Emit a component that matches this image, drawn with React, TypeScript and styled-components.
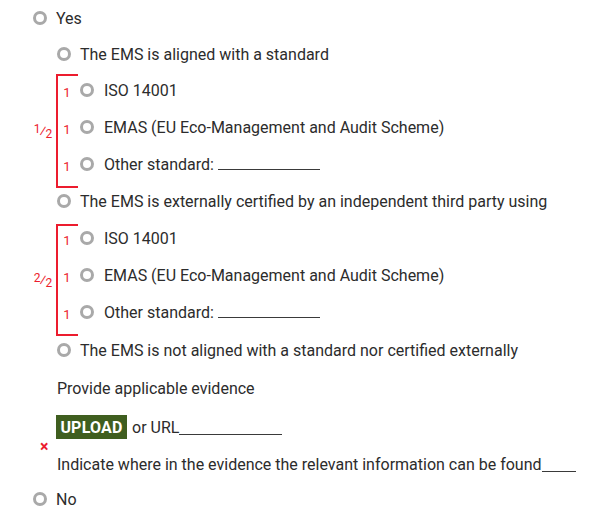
import React from "react";
import styled, { createGlobalStyle } from "styled-components";

const RED = "#ec1c2e";

const GlobalStyle = createGlobalStyle`
  body {
    margin: 0;
    background: #ffffff;
    font-family: Roboto, "Liberation Sans", Arial, sans-serif;
    color: #2c2c2c;
  }
`;

const Page = styled.div`
  display: flex;
  flex-direction: column;
  padding-top: 8px;
  width: 592px;
  font-size: 16px;
`;

const Option = styled.label<{ $indent: number; $mt: number }>`
  display: flex;
  align-items: center;
  height: 20px;
  gap: 9px;
  margin-left: ${(p) => p.$indent}px;
  margin-top: ${(p) => p.$mt}px;
  white-space: nowrap;
`;

const Radio = styled.span`
  flex: none;
  width: 14px;
  height: 14px;
  box-sizing: border-box;
  border: 3px solid #a9a9a9;
  border-radius: 50%;
`;

const Group = styled.div<{ $mt: number }>`
  display: flex;
  margin-left: 30px;
  margin-top: ${(p) => p.$mt}px;
`;

const FractionCol = styled.div`
  width: 26px;
  display: flex;
  align-items: center;
  justify-content: center;
  color: ${RED};
`;

const Fraction = styled.span`
  display: inline-flex;
  align-items: center;
  height: 17px;
  font-size: 12px;
  line-height: 1;
`;

const Num = styled.span`
  align-self: flex-start;
`;

const Den = styled.span`
  align-self: flex-end;
`;

const Slash = styled.span`
  font-size: 15px;
  margin: 0 -1px;
`;

const Bracket = styled.div<{ $pt: number }>`
  display: flex;
  flex-direction: column;
  gap: 17px;
  padding: ${(p) => p.$pt}px 0 14px;
  border-left: 2px solid ${RED};
  background:
    linear-gradient(${RED}, ${RED}) left top / 20px 2px no-repeat,
    linear-gradient(${RED}, ${RED}) left bottom / 20px 2px no-repeat;
`;

const SubOption = styled.label`
  display: flex;
  align-items: center;
  height: 20px;
  white-space: nowrap;
`;

const Count = styled.span`
  width: 18px;
  margin-right: 4px;
  padding-top: 5px;
  text-align: center;
  font-size: 13px;
  color: ${RED};
`;

const SubLabel = styled.span`
  margin-left: 10px;
`;

const Blank = styled.span<{ $w: number }>`
  display: inline-block;
  width: ${(p) => p.$w}px;
  height: 15px;
  border-bottom: 1px solid #3a3a3a;
  vertical-align: baseline;
`;

const Text = styled.div<{ $indent: number; $mt: number }>`
  display: flex;
  align-items: center;
  height: 20px;
  margin-left: ${(p) => p.$indent}px;
  margin-top: ${(p) => p.$mt}px;
  white-space: nowrap;
`;

const UploadRow = styled.div`
  display: flex;
  align-items: center;
  height: 24px;
  margin-left: 56px;
  margin-top: 17px;
  white-space: nowrap;
`;

const UploadButton = styled.button`
  height: 24px;
  width: 71px;
  padding: 0;
  border: none;
  background: #3f5e1f;
  color: #ffffff;
  font-family: Roboto, "Liberation Sans", Arial, sans-serif;
  font-weight: 700;
  font-size: 16px;
  letter-spacing: 0.2px;
  margin-right: 5px;
`;

const ErrorMark = styled.div`
  height: 10px;
  margin-top: 3px;
  margin-left: 40px;
  line-height: 10px;
  font-size: 16px;
  font-weight: 700;
  color: ${RED};
`;

type Sub = { label: React.ReactNode };

const subs: Sub[] = [
  { label: "ISO 14001" },
  { label: "EMAS (EU Eco-Management and Audit Scheme)" },
  {
    label: (
      <>
        Other standard:&nbsp;<Blank $w={102} />
      </>
    ),
  },
];

function StandardGroup({ num, den, mt, pt }: { num: number; den: number; mt: number; pt: number }) {
  return (
    <Group $mt={mt}>
      <FractionCol>
        <Fraction>
          <Num>{num}</Num>
          <Slash>⁄</Slash>
          <Den>{den}</Den>
        </Fraction>
      </FractionCol>
      <Bracket $pt={pt}>
        {subs.map((s, i) => (
          <SubOption key={i}>
            <Count>1</Count>
            <Radio />
            <SubLabel>{s.label}</SubLabel>
          </SubOption>
        ))}
      </Bracket>
    </Group>
  );
}

export default function App() {
  return (
    <>
      <GlobalStyle />
      <Page>
        <Option $indent={33} $mt={0}>
          <Radio />
          Yes
        </Option>
        <Option $indent={57} $mt={16}>
          <Radio />
          The EMS is aligned with a standard
        </Option>
        <StandardGroup num={1} den={2} mt={10} pt={6} />
        <Option $indent={57} $mt={3}>
          <Radio />
          The EMS is externally certified by an independent third party using
        </Option>
        <StandardGroup num={2} den={2} mt={13} pt={4} />
        <Option $indent={57} $mt={4}>
          <Radio />
          The EMS is not aligned with a standard nor certified externally
        </Option>
        <Text $indent={57} $mt={18}>
          Provide applicable evidence
        </Text>
        <UploadRow>
          <UploadButton>UPLOAD</UploadButton>
          or URL<Blank $w={103} />
        </UploadRow>
        <ErrorMark>×</ErrorMark>
        <Text $indent={57} $mt={2}>
          Indicate where in the evidence the relevant information can be found
          <Blank $w={34} />
        </Text>
        <Option $indent={33} $mt={15}>
          <Radio />
          No
        </Option>
      </Page>
    </>
  );
}
